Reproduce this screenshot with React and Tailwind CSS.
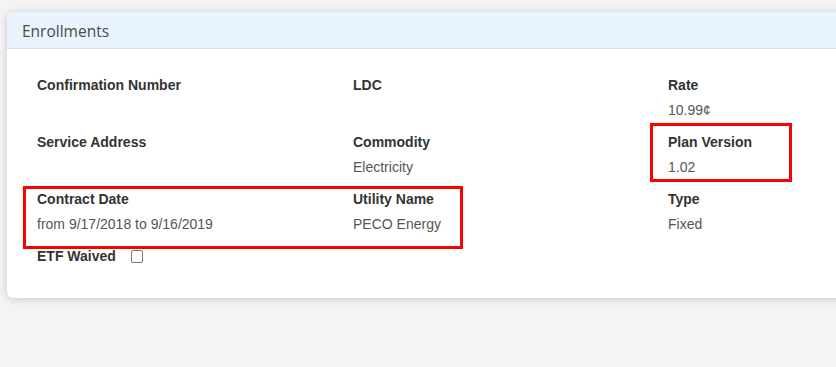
const fields = [
    { label: 'Confirmation Number', value: '' },
    { label: 'LDC', value: '' },
    { label: 'Rate', value: '10.99¢' },
    { label: 'Service Address', value: '' },
    { label: 'Commodity', value: 'Electricity' },
    { label: 'Plan Version', value: '1.02' },
    { label: 'Contract Date', value: 'from 9/17/2018 to 9/16/2019' },
    { label: 'Utility Name', value: 'PECO Energy' },
    { label: 'Type', value: 'Fixed' },
];

const Field = ({ label, value }) => (
    <div className="pb-[12px]">
        <div className="h-[20px] leading-[20px] font-bold text-[#333]">{label}</div>
        <div className="mt-[5px] h-[20px] leading-[20px] text-[#555]">{value}</div>
    </div>
);

const App = () => {
    return (
        <div className="relative min-h-[367px] bg-[#f4f4f4] pt-[12px] pl-[7px] overflow-hidden font-['Liberation_Sans',Arial,sans-serif] text-[14px]">
            <div className="w-[1000px] bg-white rounded-[6px] shadow-[0_1px_8px_rgba(0,0,0,0.18)] overflow-hidden">
                <div className="h-[37px] bg-[#e9f3fd] border-b border-[#d6dde6] px-[15px] pt-[3px] flex items-center">
                    <span className="font-['Open_Sans',sans-serif] text-[15.5px] text-[#4a4a4a]">Enrollments</span>
                </div>
                <div className="pt-[26px] pb-[32px] pl-[30px]">
                    <div className="grid grid-cols-[316px_315px_1fr]">
                        {fields.map((f) => (
                            <Field key={f.label} label={f.label} value={f.value} />
                        ))}
                    </div>
                    <div className="flex items-center h-[20px] gap-[15px]">
                        <span className="font-bold text-[#333]">ETF Waived</span>
                        <span className="w-[12px] h-[13px] border border-[#767676] rounded-[2px] bg-white" />
                    </div>
                </div>
            </div>

            {/* annotation boxes */}
            <div className="absolute left-[23px] top-[186px] w-[440px] h-[63px] border-[3px] border-[#ff0000]" />
            <div className="absolute left-[650px] top-[123px] w-[142px] h-[59px] border-[3px] border-[#ff0000]" />
        </div>
    );
};

export default App;
